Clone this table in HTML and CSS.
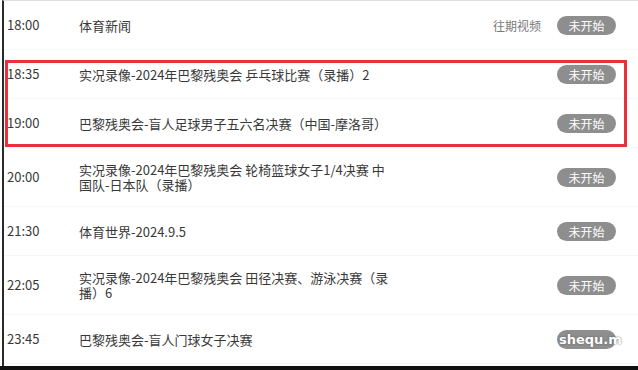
FILE: index.html
```html
<!DOCTYPE html>
<html lang="zh-CN">
<head>
<meta charset="utf-8">
<title>节目单</title>
<link rel="stylesheet" href="styles.css">
</head>
<body>
<div class="frame">
  <ul class="list">
    <li class="row">
      <span class="time">18:00</span>
      <span class="title">体育新闻</span>
      <span class="extra">往期视频</span>
      <span class="badge">未开始</span>
    </li>
    <li class="row">
      <span class="time">18:35</span>
      <span class="title">实况录像-2024年巴黎残奥会 乒乓球比赛（录播）2</span>
      <span class="badge">未开始</span>
    </li>
    <li class="row">
      <span class="time">19:00</span>
      <span class="title">巴黎残奥会-盲人足球男子五六名决赛（中国-摩洛哥）</span>
      <span class="badge">未开始</span>
    </li>
    <li class="row">
      <span class="time">20:00</span>
      <span class="title">实况录像-2024年巴黎残奥会 轮椅篮球女子1/4决赛 中国队-日本队（录播）</span>
      <span class="badge">未开始</span>
    </li>
    <li class="row">
      <span class="time">21:30</span>
      <span class="title">体育世界-2024.9.5</span>
      <span class="badge">未开始</span>
    </li>
    <li class="row">
      <span class="time">22:05</span>
      <span class="title">实况录像-2024年巴黎残奥会 田径决赛、游泳决赛（录播）6</span>
      <span class="badge">未开始</span>
    </li>
    <li class="row">
      <span class="time">23:45</span>
      <span class="title">巴黎残奥会-盲人门球女子决赛</span>
      <span class="badge badge-mark">shequ.m</span>
    </li>
  </ul>
  <div class="highlight"></div>
</div>
<div class="bottom-bar"></div>
</body>
</html>
```

FILE: styles.css
```css
html, body {
  margin: 0;
  padding: 0;
  background: #ffffff;
}
body {
  width: 638px;
  height: 370px;
  overflow: hidden;
  font-family: "Noto Sans CJK SC", sans-serif;
  color: #383838;
}
.frame {
  position: relative;
  height: 366px;
  margin-left: 2px;
  border-left: 2px solid #2a2a2a;
  border-top: 1px solid #dddddd;
  box-sizing: border-box;
  overflow: hidden;
}
.list {
  list-style: none;
  margin: 0;
  padding: 0;
}
.row {
  display: flex;
  align-items: center;
  min-height: 20px;
  padding: 14px 22px 14px 3px;
  border-bottom: 1px solid #f6f7f9;
  font-size: 13px;
}
.time {
  width: 72px;
  flex: none;
  line-height: 20px;
}
.title {
  width: 318px;
  flex: none;
  line-height: 15px;
}
.extra {
  margin-left: auto;
  margin-right: 16px;
  font-size: 12px;
  color: #7a7a7a;
}
.badge {
  margin-left: auto;
  flex: none;
  width: 59px;
  height: 19px;
  line-height: 19px;
  border-radius: 10px;
  background: #8e8e8e;
  color: #ffffff;
  font-size: 12px;
  text-align: center;
}
.extra + .badge {
  margin-left: 0;
}
.badge-mark {
  font-family: "DejaVu Sans", sans-serif;
  font-weight: bold;
  font-size: 13px;
  text-align: left;
  padding-left: 2px;
  box-sizing: border-box;
  white-space: nowrap;
  overflow: visible;
  text-shadow: 0 0 2px #555;
}
.highlight {
  position: absolute;
  left: 1px;
  top: 59px;
  width: 622px;
  height: 87px;
  border: 3px solid #e8313a;
  box-sizing: border-box;
  pointer-events: none;
}
.bottom-bar {
  height: 4px;
  background: #111111;
}
```
